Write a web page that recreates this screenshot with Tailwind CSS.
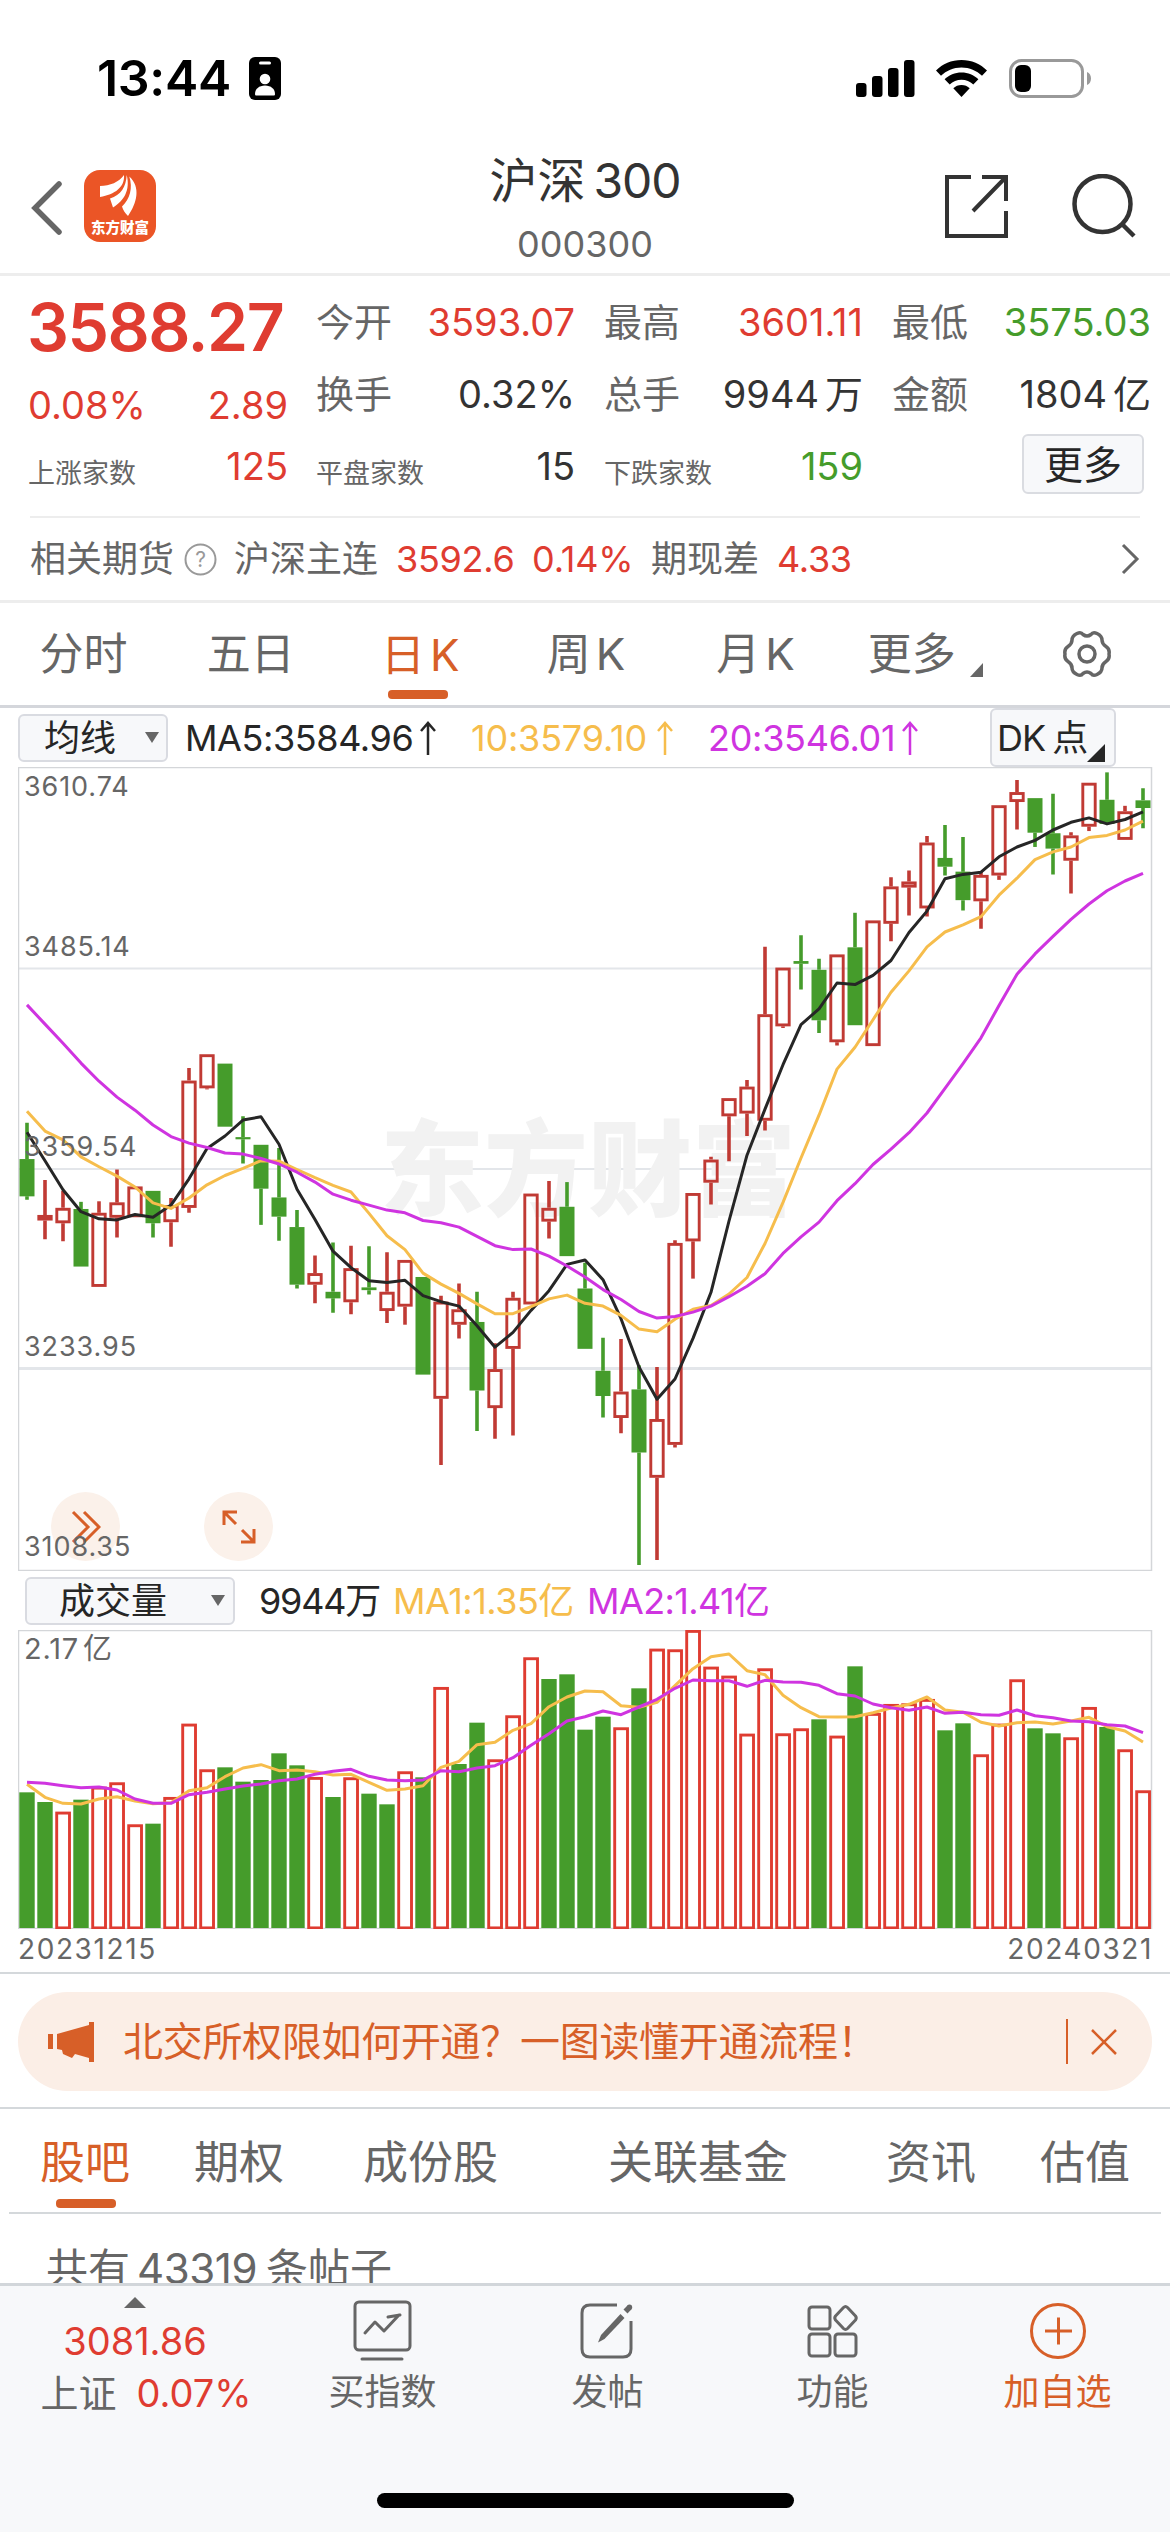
<!DOCTYPE html>
<html lang="zh-CN">

<head>
  <meta charset="UTF-8">
  <meta name="viewport" content="width=device-width, initial-scale=1.0">
  <title>沪深300</title>
  <script src="https://cdn.jsdelivr.net/npm/@tailwindcss/browser@4"></script>
</head>

<body class="w-[1170px] h-[2532px] overflow-hidden bg-white flex flex-col font-['Inter','Noto_Sans_CJK_SC',sans-serif] text-[#666] leading-none whitespace-nowrap">

  <!-- Status bar -->
  <div class="h-[140px] shrink-0 pt-[55px] pl-[97px] pr-[79px] flex items-start justify-between text-black">
    <div class="flex items-center h-[46px]">
      <span class="text-[50px] font-semibold w-[136px] tracking-[-0.3px]">13:44</span>
      <svg class="ml-4" width="32" height="43" viewBox="0 0 32 43">
        <rect width="32" height="43" rx="6" />
        <rect x="10" y="4.5" width="12" height="3" rx="1.5" fill="#fff" />
        <circle cx="16" cy="22" r="5.3" fill="#fff" />
        <path d="M6 37c0-5 4-8.500 10-8.500s10 3.500 10 8.500c0 1-.5 1.500-1.500 1.500h-17C6.500 38.500 6 38 6 37z" fill="#fff" />
      </svg>
    </div>
    <div class="flex items-center h-[46px]">
      <svg width="59" height="37" viewBox="0 0 59 37">
        <rect y="23" width="10.500" height="14" rx="3" />
        <rect x="16" y="16" width="10.500" height="21" rx="3" />
        <rect x="32" y="8" width="10.500" height="29" rx="3" />
        <rect x="48" width="10.500" height="37" rx="3" />
      </svg>
      <svg class="ml-[21px]" width="51" height="37" viewBox="0 0 51 37">
        <path d="M25.500 0C35.500 0 44.500 4 51 10.500L46 15.800C40.600 10.600 33.500 7.500 25.500 7.500S10.400 10.600 5 15.800L0 10.500C6.500 4 15.500 0 25.500 0z" />
        <path d="M25.500 12.500C32 12.500 38 15 42.400 19.300L37.300 24.500C34.200 21.500 30 19.800 25.500 19.800S16.800 21.500 13.700 24.500L8.600 19.300C13 15 19 12.500 25.500 12.500z" />
        <path d="M25.500 25C28.700 25 31.600 26.200 33.700 28.300L25.500 37L17.300 28.300C19.400 26.200 22.300 25 25.500 25z" />
      </svg>
      <svg class="ml-[22px]" width="82" height="39" viewBox="0 0 82 39">
        <rect x="1.500" y="1.500" width="72" height="36" rx="11" fill="none" stroke="#999" stroke-width="3" />
        <rect x="6" y="6" width="16" height="27" rx="6" />
        <path d="M78 13c2.700 1.200 4 3.500 4 6.500s-1.300 5.300-4 6.500z" fill="#999" />
      </svg>
    </div>
  </div>

  <!-- Header -->
  <div class="h-[136px] shrink-0 flex justify-between border-b-[3px] border-[#ededed]">
    <div class="w-[380px] flex items-start pl-[31px] pt-[30px]">
      <svg class="mt-[11px]" width="31" height="54" viewBox="0 0 31 54">
        <path d="M28 3L4 27L28 51" fill="none" stroke="#666" stroke-width="5.500" stroke-linecap="round" />
      </svg>
      <svg class="ml-[22px]" width="72" height="72" viewBox="0 0 72 72">
        <rect width="72" height="72" rx="16" fill="#eb5526" />
        <path d="M16 16C26 16 35 12 40 5C41 17 31 24.500 16 27z" fill="#fff" />
        <path d="M42.700 5C42 17 37 25 26 28.500L29 37.500C40 31 46.500 20 42.700 5z" fill="#fff" />
        <path d="M45.300 6.500C49 18 46 29 38 36.500C39 40 41 43 44 46C53 33 57 17 45.300 6.500z" fill="#fff" />
        <text x="36" y="63" text-anchor="middle" font-size="14.500" font-weight="900" fill="#fff">东方财富</text>
      </svg>
    </div>
    <div class="flex flex-col items-center pt-[17px]">
      <div class="text-[48px] text-[#333] flex items-center gap-[8px]"><span>沪深</span><span class="tracking-[-1px]">300</span></div>
      <div class="text-[36px] mt-[21px]">000300</div>
    </div>
    <div class="w-[380px] flex justify-end pr-[32px] pt-[34px]">
      <svg width="66" height="66" viewBox="0 0 66 66" fill="none" stroke="#333" stroke-width="4">
        <path d="M27 3H3V62H62V37M38 3H62V27M62 3L29 37" />
      </svg>
      <svg class="ml-[62px]" width="66" height="66" viewBox="0 0 66 66" fill="none" stroke="#333" stroke-width="4.500">
        <circle cx="30.500" cy="30" r="28" />
        <path d="M50 50L62 62" />
      </svg>
    </div>
  </div>

  <!-- Quote -->
  <div class="h-[242px] shrink-0 mx-[30px] flex border-b-2 border-[#ededed] text-[#333] text-[38px]">
    <div class="w-[258px] shrink-0 flex flex-col pt-[18px] text-[#df3c31]">
      <div class="h-[66px] -ml-[3px] flex items-center text-[66px] font-semibold tracking-[-1.5px]">3588.27</div>
      <div class="h-[72px] mt-[9px] -ml-[2px] flex items-center justify-between"><span>0.08%</span><span>2.89</span></div>
      <div class="h-[50px] flex items-center justify-between"><span class="text-[27px] text-[#666] pt-[14px] -ml-[2px]">上涨家数</span><span>125</span></div>
    </div>
    <div class="w-[259px] shrink-0 ml-[28px] flex flex-col pt-[10px]">
      <div class="h-[72px] flex items-center justify-between"><span class="text-[#666]">今开</span><span class="text-[#df3c31]">3593.07</span></div>
      <div class="h-[72px] flex items-center justify-between"><span class="text-[#666]">换手</span><span>0.32%</span></div>
      <div class="h-[72px] flex items-center justify-between"><span class="text-[27px] text-[#666] pt-[14px]">平盘家数</span><span>15</span></div>
    </div>
    <div class="w-[259px] shrink-0 ml-[29px] flex flex-col pt-[10px]">
      <div class="h-[72px] flex items-center justify-between"><span class="text-[#666]">最高</span><span class="text-[#df3c31]">3601.11</span></div>
      <div class="h-[72px] flex items-center justify-between"><span class="text-[#666]">总手</span><span class="flex gap-[6px]">9944<span>万</span></span></div>
      <div class="h-[72px] flex items-center justify-between"><span class="text-[27px] text-[#666] pt-[14px]">下跌家数</span><span class="text-[#459c2b]">159</span></div>
    </div>
    <div class="w-[259px] shrink-0 ml-[29px] flex flex-col pt-[10px]">
      <div class="h-[72px] flex items-center justify-between"><span class="text-[#666]">最低</span><span class="text-[#459c2b]">3575.03</span></div>
      <div class="h-[72px] flex items-center justify-between"><span class="text-[#666]">金额</span><span class="flex gap-[6px]">1804<span>亿</span></span></div>
      <button class="w-[122px] h-[60px] mt-[4px] ml-[130px] rounded-[6px] border-2 border-[#dadce1] bg-[#f7f8fa] text-[39px] text-[#262626] flex items-center justify-center">更多</button>
    </div>
  </div>

  <!-- Related futures -->
  <div class="h-[85px] shrink-0 pl-[30px] pr-[30px] border-b-[3px] border-[#ededed] flex items-center text-[36px]">
    <span>相关期货</span>
    <svg class="ml-[10px]" width="33" height="33" viewBox="0 0 33 33">
      <circle cx="16.500" cy="16.500" r="15" fill="none" stroke="#999" stroke-width="2" />
      <text x="16.500" y="24" text-anchor="middle" font-size="21" fill="#999">?</text>
    </svg>
    <span class="ml-[17px]">沪深主连</span>
    <span class="ml-[18px] w-[119px] text-[#df3c31] tracking-[-0.3px]">3592.6</span>
    <span class="ml-[17px] w-[102px] text-[#df3c31] tracking-[-0.2px]">0.14%</span>
    <span class="ml-[17px]">期现差</span>
    <span class="ml-[18px] text-[#df3c31] tracking-[-0.3px]">4.33</span>
    <svg class="ml-auto" width="19" height="32" viewBox="0 0 19 32">
      <path d="M2 2L16 16L2 30" fill="none" stroke="#666" stroke-width="3" />
    </svg>
  </div>

  <!-- Period tabs -->
  <div class="h-[105px] shrink-0 grid grid-cols-7 border-b-[3px] border-[#d4d6db] text-[44px]">
    <div class="flex items-center justify-center">分时</div>
    <div class="flex items-center justify-center">五日</div>
    <div class="flex flex-col items-center pt-[30px] text-[#d75f28]">
      <div class="h-[44px] flex gap-[5px] pl-[5px]">日<span>K</span></div>
      <div class="w-[60px] h-[9px] mt-[13px] rounded-[4px] bg-[#d75f28]"></div>
    </div>
    <div class="flex items-center justify-center gap-[5px] pl-[2px]">周<span>K</span></div>
    <div class="flex items-center justify-center gap-[5px] pl-[7px]">月<span>K</span></div>
    <div class="flex items-center justify-center pl-[12px]">更多
      <svg class="ml-[14px] mt-[32px]" width="13" height="14" viewBox="0 0 13 14"><path d="M13 0V14H0z" fill="#666" /></svg>
    </div>
    <div class="flex items-center justify-center pl-[2px]">
      <svg width="50" height="48" viewBox="0 0 50 48" fill="none" stroke="#666" stroke-width="3.500" stroke-linejoin="round">
        <path d="M15 3.500Q19 1.500 21 4.500Q25 7.500 29 4.500Q31 1.500 35 3.500Q40 6 40 10Q40 14 44 16.500Q48 19 47 24Q48 29 44 31.500Q40 34 40 38Q40 42 35 44.500Q31 46.500 29 43.500Q25 40.500 21 43.500Q19 46.500 15 44.500Q10 42 10 38Q10 34 6 31.500Q2 29 3 24Q2 19 6 16.500Q10 14 10 10Q10 6 15 3.500z" />
        <circle cx="25" cy="24" r="8" />
      </svg>
    </div>
  </div>

  <!-- Moving averages -->
  <div class="h-[59px] shrink-0 pl-[18px] pr-[54px] flex items-center text-[36px]">
    <div class="w-[150px] h-[48px] rounded-[6px] border-2 border-[#d9dbe1] bg-[#f7f8fa] flex items-center justify-between pl-[24px] pr-[7px] text-[#262626]">均线
      <svg width="14" height="11" viewBox="0 0 14 11"><path d="M0 0H14L7 11z" fill="#666" /></svg>
    </div>
    <div class="ml-[17px] w-[286px] flex items-center text-[#262626]"><span class="w-[227px] tracking-[-0.4px]">MA5:3584.96</span>
      <svg class="ml-[8px]" width="16" height="34" viewBox="0 0 16 34" fill="none" stroke="currentColor" stroke-width="2.500"><path d="M8 34V2M1 10L8 2L15 10" /></svg>
    </div>
    <div class="w-[237px] flex items-center text-[#f6bd4c]"><span class="w-[178px] tracking-[-0.2px]">10:3579.10</span>
      <svg class="ml-[8px]" width="16" height="34" viewBox="0 0 16 34" fill="none" stroke="currentColor" stroke-width="2.500"><path d="M8 34V2M1 10L8 2L15 10" /></svg>
    </div>
    <div class="flex items-center text-[#cf34e0]"><span class="w-[187px] tracking-[-0.3px]">20:3546.01</span>
      <svg class="ml-[7px]" width="16" height="34" viewBox="0 0 16 34" fill="none" stroke="currentColor" stroke-width="2.500"><path d="M8 34V2M1 10L8 2L15 10" /></svg>
    </div>
    <div class="ml-auto w-[126px] h-[59px] shrink-0 rounded-[6px] border-2 border-[#d9dbe1] bg-[#f7f8fa] flex items-center pl-[5px] text-[#262626]">
      <span class="tracking-[-1px]">DK</span><span class="ml-[7px]">点</span>
      <svg class="-ml-[1px] mt-[30px] shrink-0" width="18" height="18" viewBox="0 0 18 18"><path d="M18 0V18H0z" fill="#262626" /></svg>
    </div>
  </div>

  <!-- Candle chart -->
  <div class="relative h-[804px] shrink-0 ml-[18px] w-[1135px]">
    <svg id="kline" class="block" width="1135" height="804" viewBox="18 767 1135 804">
      <g stroke="#e3e6ea">
        <path d="M18 968.500H1152" stroke-width="2" />
        <path d="M18 1169H1152" stroke-width="2" />
        <path d="M18 1368.500H1152" stroke-width="3" />
      </g>
      <rect x="18.500" y="767.500" width="1133" height="803" fill="none" stroke="#d4d6d9" stroke-width="1.500" />
      <text x="588" y="1208" text-anchor="middle" font-size="104" font-weight="900" fill="#f2f2f2">东方财富</text>
    </svg>
    <!-- Chart controls -->
    <div class="absolute left-[33px] top-[725px] w-[69px] h-[69px] rounded-full bg-[#fbf1ea] flex items-center justify-center">
      <svg width="30" height="34" viewBox="0 0 30 34" fill="none" stroke="#d75f28" stroke-width="3"><path d="M2 2L17 17L2 32M13 2L28 17L13 32" /></svg>
    </div>
    <div class="absolute left-[186px] top-[725px] w-[69px] h-[69px] rounded-full bg-[#fbf1ea] flex items-center justify-center">
      <svg width="34" height="34" viewBox="0 0 34 34" fill="none" stroke="#d75f28" stroke-width="3"><path d="M15 2H2V15M2 2L14 14M32 19V32H19M32 32L20 20" /></svg>
    </div>
    <!-- Price axis -->
    <div class="absolute left-[6px] top-0 text-[27px] leading-[40px] tracking-[0.9px] flex flex-col">
      <span>3610.74</span>
      <span class="mt-[120px]">3485.14</span>
      <span class="mt-[160px]">3359.54</span>
      <span class="mt-[160px]">3233.95</span>
      <span class="mt-[160px]">3108.35</span>
    </div>
  </div>

  <!-- Volume header -->
  <div class="h-[59px] shrink-0 pl-[25px] flex items-center text-[36px]">
    <div class="w-[210px] h-[48px] rounded-[6px] border-2 border-[#d9dbe1] bg-[#f7f8fa] flex items-center justify-between pl-[32px] pr-[8px] text-[#262626]">成交量
      <svg width="14" height="11" viewBox="0 0 14 11"><path d="M0 0H14L7 11z" fill="#666" /></svg>
    </div>
    <span class="ml-[24px] w-[134px] text-[#262626] tracking-[-1.2px]">9944万</span>
    <span class="w-[194px] text-[#f6bd4c] tracking-[-0.5px]">MA1:1.35亿</span>
    <span class="text-[#cf34e0] tracking-[-0.6px]">MA2:1.41亿</span>
  </div>

  <!-- Volume chart -->
  <div class="relative h-[299px] shrink-0 ml-[18px] w-[1135px]">
    <svg id="volume" class="block" width="1135" height="299" viewBox="18 1630 1135 299">
      <rect x="18.500" y="1630.500" width="1133" height="298" fill="none" stroke="#d4d6d9" stroke-width="1.500" />
    </svg>
    <div class="absolute left-[6px] top-[4px] text-[29px] tracking-[0.8px] flex gap-[4px]">2.17<span>亿</span></div>
  </div>
  <div class="h-[45px] shrink-0 pl-[18px] pr-[17px] pb-[3px] flex items-center justify-between text-[28px] tracking-[1.6px] border-b-2 border-[#d4d8db]">
    <span>20231215</span><span>20240321</span>
  </div>

  <!-- Notice -->
  <div class="h-[135px] shrink-0 px-[18px] pt-[18px] border-b-2 border-[#d4d8db]">
    <div class="h-[99px] rounded-full bg-[#fbeee6] text-[#d75f28] flex items-center pl-[30px] pr-[35px] text-[40px]">
      <svg width="47" height="40" viewBox="0 0 47 40" fill="currentColor">
        <path d="M0 12H5V27H0zM9 12L41 3V0H46V40H41V36L27 32L24 36L15 32L14 28L9 27z" />
      </svg>
      <span class="ml-[28px] tracking-[-0.3px]">北交所权限如何开通？一图读懂开通流程！</span>
      <div class="ml-auto w-[2px] h-[45px] bg-[#d75f28]"></div>
      <svg class="ml-[23px]" width="26" height="26" viewBox="0 0 26 26" fill="none" stroke="currentColor" stroke-width="2.500"><path d="M1 1L25 25M25 1L1 25" /></svg>
    </div>
  </div>

  <!-- Content tabs -->
  <div class="h-[105px] shrink-0 mx-[9px] pl-[31px] flex border-b-2 border-[#d4d8db] text-[45px] pt-[31px]">
    <div class="flex flex-col items-center text-[#d75f28]">股吧<div class="w-[60px] h-[9px] mt-[14px] rounded-[4px] bg-[#d75f28] mr-[-2px]"></div></div>
    <span class="ml-[64px]">期权</span>
    <span class="ml-[79px]">成份股</span>
    <span class="ml-[110px]">关联基金</span>
    <span class="ml-[98px]">资讯</span>
    <span class="ml-[64px]">估值</span>
  </div>
  <div class="h-[69px] shrink-0 overflow-hidden pl-[46px] pt-[34px] text-[42px] flex gap-[7px]">
    <span>共有</span><span class="w-[122px] tracking-[-0.4px]">43319</span><span>条帖子</span>
  </div>

  <!-- Bottom bar -->
  <div class="h-[249px] shrink-0 border-t-[3px] border-[#d2d6da] bg-[#f7f8fa] relative flex text-[36px]">
    <div class="w-[270px] flex flex-col items-center pt-[11px] text-[38px] text-[#df3c31]">
      <svg width="22" height="11" viewBox="0 0 22 11"><path d="M0 11L11 0L22 11z" fill="#666" /></svg>
      <span class="mt-[14px]">3081.86</span>
      <div class="mt-[14px] pl-[22px] flex gap-[20px]"><span class="text-[#666]">上证</span><span>0.07%</span></div>
    </div>
    <div class="w-[225px] flex flex-col items-center pt-[14px]">
      <svg width="60" height="62" viewBox="0 0 60 62" fill="none" stroke="#666" stroke-width="3" stroke-linecap="round" stroke-linejoin="round">
        <rect x="2" y="2" width="55" height="48" rx="4" />
        <path d="M12 33L22 22L31 31L46 15M35 17L47 15M9 59H49" />
      </svg>
      <span class="mt-[12px]">买指数</span>
    </div>
    <div class="w-[225px] flex flex-col items-center pt-[14px]">
      <svg width="60" height="62" viewBox="0 0 60 62" fill="none" stroke="#666" stroke-width="3">
        <path d="M39 5H12Q4 5 4 13V49Q4 57 12 57H45Q53 57 53 49V21" />
        <path d="M42.500 14L46.500 18L26.500 39L20 42.500L23 35z" fill="#666" stroke="none" />
        <path d="M47.500 11.500L51.500 7.300" stroke-width="5.500" /><circle cx="51.500" cy="7.300" r="2.700" fill="#666" stroke="none" />
      </svg>
      <span class="mt-[12px]">发帖</span>
    </div>
    <div class="w-[225px] flex flex-col items-center pt-[14px]">
      <svg width="60" height="62" viewBox="0 0 60 62" fill="none" stroke="#666" stroke-width="3" stroke-linejoin="round">
        <rect x="6" y="7" width="21" height="22" rx="3" />
        <rect x="6" y="34" width="21" height="22" rx="3" />
        <rect x="32" y="34" width="21" height="22" rx="3" />
        <path d="M40.500 7.500Q42.500 5.500 44.500 7.500L52.500 16Q54 18 52.500 20L44.500 28.500Q42.500 30.500 40.500 28.500L32.500 20Q31 18 32.500 16z" />
      </svg>
      <span class="mt-[12px]">功能</span>
    </div>
    <div class="w-[225px] flex flex-col items-center pt-[14px] text-[#d75f28]">
      <svg width="60" height="62" viewBox="0 0 60 62" fill="none" stroke="#d75f28" stroke-width="3">
        <circle cx="30" cy="31" r="26.500" /><path d="M17 31H44M30.500 17.500V44.500" />
      </svg>
      <span class="mt-[12px]">加自选</span>
    </div>
    <div class="absolute left-[377px] bottom-[24px] w-[417px] h-[15px] rounded-full bg-black"></div>
  </div>

  <script>
    // [up, high, body top, body bottom, low]
    const candles = [
      [0, 698, 764, 832, 838], [1, 802, 866, 876, 910], [1, 822, 853, 881, 914], [0, 842, 855, 960, 960],
      [1, 841, 862, 997, 997], [1, 783, 843, 871, 907], [1, 814, 814, 870, 870], [0, 822, 822, 881, 907],
      [1, 835, 848, 879, 924], [1, 598, 621, 853, 862], [1, 573, 573, 635, 637], [0, 590, 590, 705, 705],
      [0, 686, 724, 728, 772], [0, 738, 738, 818, 884], [0, 744, 834, 869, 913], [0, 857, 888, 993, 1000],
      [1, 940, 972, 993, 1027], [0, 916, 1006, 1018, 1044], [1, 922, 963, 1025, 1047], [0, 923, 998, 1003, 1011],
      [1, 934, 1006, 1041, 1063], [1, 948, 948, 1033, 1066], [0, 979, 979, 1157, 1157], [1, 1013, 1024, 1201, 1322],
      [1, 991, 1038, 1066, 1091], [0, 1006, 1061, 1186, 1260], [1, 1100, 1147, 1218, 1274], [1, 1006, 1017, 1110, 1268],
      [1, 827, 827, 1029, 1029], [1, 804, 853, 878, 909], [0, 806, 851, 941, 941], [0, 953, 1000, 1110, 1110],
      [0, 1090, 1150, 1196, 1235], [1, 1092, 1188, 1236, 1264], [0, 1140, 1184, 1299, 1504], [1, 1143, 1238, 1345, 1495],
      [1, 912, 917, 1285, 1290], [1, 826, 826, 914, 982], [1, 760, 765, 807, 847], [1, 653, 653, 686, 768],
      [1, 620, 632, 681, 722], [1, 377, 500, 694, 712], [1, 415, 415, 522, 525], [0, 356, 403, 408, 455],
      [0, 399, 419, 511, 534], [1, 391, 391, 551, 557], [0, 315, 378, 520, 520], [1, 329, 329, 558, 558],
      [1, 250, 267, 335, 367], [1, 238, 258, 269, 320], [1, 175, 187, 307, 322], [0, 155, 215, 231, 247],
      [0, 177, 240, 292, 311], [1, 240, 246, 294, 344], [1, 119, 119, 247, 255], [1, 73, 95, 113, 163],
      [0, 106, 106, 169, 195], [0, 98, 170, 198, 245], [1, 168, 174, 220, 280], [1, 78, 78, 158, 166],
      [0, 59, 109, 153, 153], [1, 120, 130, 182, 182], [0, 88, 110, 124, 161]
    ];
    const ma5 = [715, 767, 820, 860, 873, 875, 865, 870, 848, 800, 745, 722, 693, 687, 737, 819, 874, 932, 962, 986, 989, 985, 1013, 1024, 1032, 1068, 1107, 1080, 1040, 1004, 956, 948, 984, 1055, 1143, 1202, 1165, 1091, 1007, 877, 757, 673, 592, 519, 490, 443, 446, 429, 402, 351, 312, 253, 245, 241, 213, 195, 183, 164, 150, 142, 153, 145, 131];
    const ma10 = [677, 713, 729, 760, 778, 795, 815, 844, 854, 835, 811, 794, 781, 767, 768, 783, 798, 812, 824, 863, 904, 929, 972, 992, 1009, 1028, 1046, 1046, 1033, 1019, 1012, 1027, 1032, 1049, 1074, 1079, 1056, 1038, 1031, 1010, 980, 918, 843, 762, 684, 600, 560, 510, 460, 421, 377, 350, 337, 322, 283, 252, 218, 204, 195, 178, 174, 164, 148];
    const ma20 = [483, 518, 553, 589, 622, 651, 675, 702, 723, 735, 743, 753, 755, 763, 773, 788, 806, 828, 839, 848, 857, 862, 876, 880, 888, 905, 922, 929, 928, 941, 959, 979, 1002, 1020, 1042, 1054, 1051, 1043, 1032, 1015, 996, 973, 936, 906, 879, 840, 809, 774, 746, 716, 680, 635, 590, 543, 484, 427, 390, 358, 327, 299, 275, 257, 243];

    // [up, bar top]
    const bars = [
      [0, 697], [0, 726], [1, 755], [0, 719], [1, 680], [1, 667], [1, 793], [0, 791], [1, 711], [1, 491], [1, 628],
      [0, 622], [0, 665], [0, 660], [0, 580], [0, 616], [1, 651], [0, 711], [1, 652], [0, 701], [0, 733], [1, 634],
      [0, 652], [1, 381], [0, 612], [0, 488], [1, 598], [1, 466], [1, 292], [0, 357], [0, 343], [0, 509], [0, 470],
      [1, 502], [0, 385], [1, 266], [1, 268], [1, 210], [1, 320], [1, 347], [1, 521], [1, 325], [1, 520], [1, 505],
      [0, 478], [1, 527], [0, 319], [1, 459], [1, 432], [1, 430], [1, 417], [0, 511], [0, 490], [1, 583], [1, 491],
      [1, 358], [0, 505], [0, 520], [1, 532], [1, 441], [0, 501], [1, 568], [1, 691]
    ];
    const vol1 = [673, 712, 730, 732, 717, 710, 723, 731, 728, 692, 683, 650, 624, 614, 632, 630, 635, 645, 643, 667, 691, 687, 677, 622, 604, 554, 547, 511, 491, 440, 411, 393, 395, 437, 442, 427, 377, 326, 290, 282, 332, 344, 406, 443, 470, 471, 470, 458, 444, 433, 411, 450, 457, 487, 498, 488, 486, 492, 483, 472, 500, 513, 546];
    const vol2 = [667, 670, 677, 683, 681, 690, 717, 730, 730, 704, 697, 687, 678, 672, 662, 657, 643, 634, 628, 649, 660, 662, 660, 632, 635, 624, 617, 593, 556, 521, 483, 470, 453, 464, 441, 418, 385, 360, 362, 362, 379, 361, 366, 367, 376, 401, 408, 432, 443, 451, 441, 460, 457, 464, 466, 450, 467, 473, 483, 485, 494, 498, 518];

    const GREEN = '#459c2b';
    const x = (i) => 27 + i * 18;
    const yPrice = (v) => 740 + v * 0.5485;
    const yVol = (v) => 1560 + v / 3;

    const line = (data, y, color) =>
      `<polyline fill="none" stroke="${color}" stroke-width="3" stroke-linejoin="round" points="${data.map((v, i) => x(i) + ',' + y(v).toFixed(1)).join(' ')}"/>`;

    let html = '';
    candles.forEach(([up, high, top, bottom, low], i) => {
      const h = yPrice(high), t = yPrice(top), b = yPrice(bottom), l = yPrice(low);
      const color = up ? '#c03a34' : GREEN;
      html += `<path d="M${x(i)} ${h}V${t}M${x(i)} ${b}V${l}" stroke="${color}" stroke-width="3.6"/>`;
      if (up) {
        html += `<rect x="${x(i) - 6.2}" y="${t + 1.4}" width="12.4" height="${Math.max(b - t - 2.8, 2)}" fill="none" stroke="${color}" stroke-width="2.9"/>`;
      } else {
        html += `<rect x="${x(i) - 7.5}" y="${t}" width="15" height="${b - t}" fill="${color}"/>`;
      }
    });
    html += line(ma5, yPrice, '#262626') + line(ma10, yPrice, '#f6bd4c') + line(ma20, yPrice, '#cf34e0');
    document.getElementById('kline').insertAdjacentHTML('beforeend', html);

    html = '';
    bars.forEach(([up, v], i) => {
      const t = yVol(v);
      html += up
        ? `<rect x="${x(i) - 6.3}" y="${t + 1.4}" width="12.8" height="${1926.5 - t}" fill="none" stroke="#df3c31" stroke-width="2.9"/>`
        : `<rect x="${x(i) - 7.7}" y="${t}" width="15.4" height="${1928 - t}" fill="${GREEN}"/>`;
    });
    html += line(vol1, yVol, '#f6bd4c') + line(vol2, yVol, '#cf34e0');
    document.getElementById('volume').insertAdjacentHTML('beforeend', html);
  </script>
</body>

</html>
